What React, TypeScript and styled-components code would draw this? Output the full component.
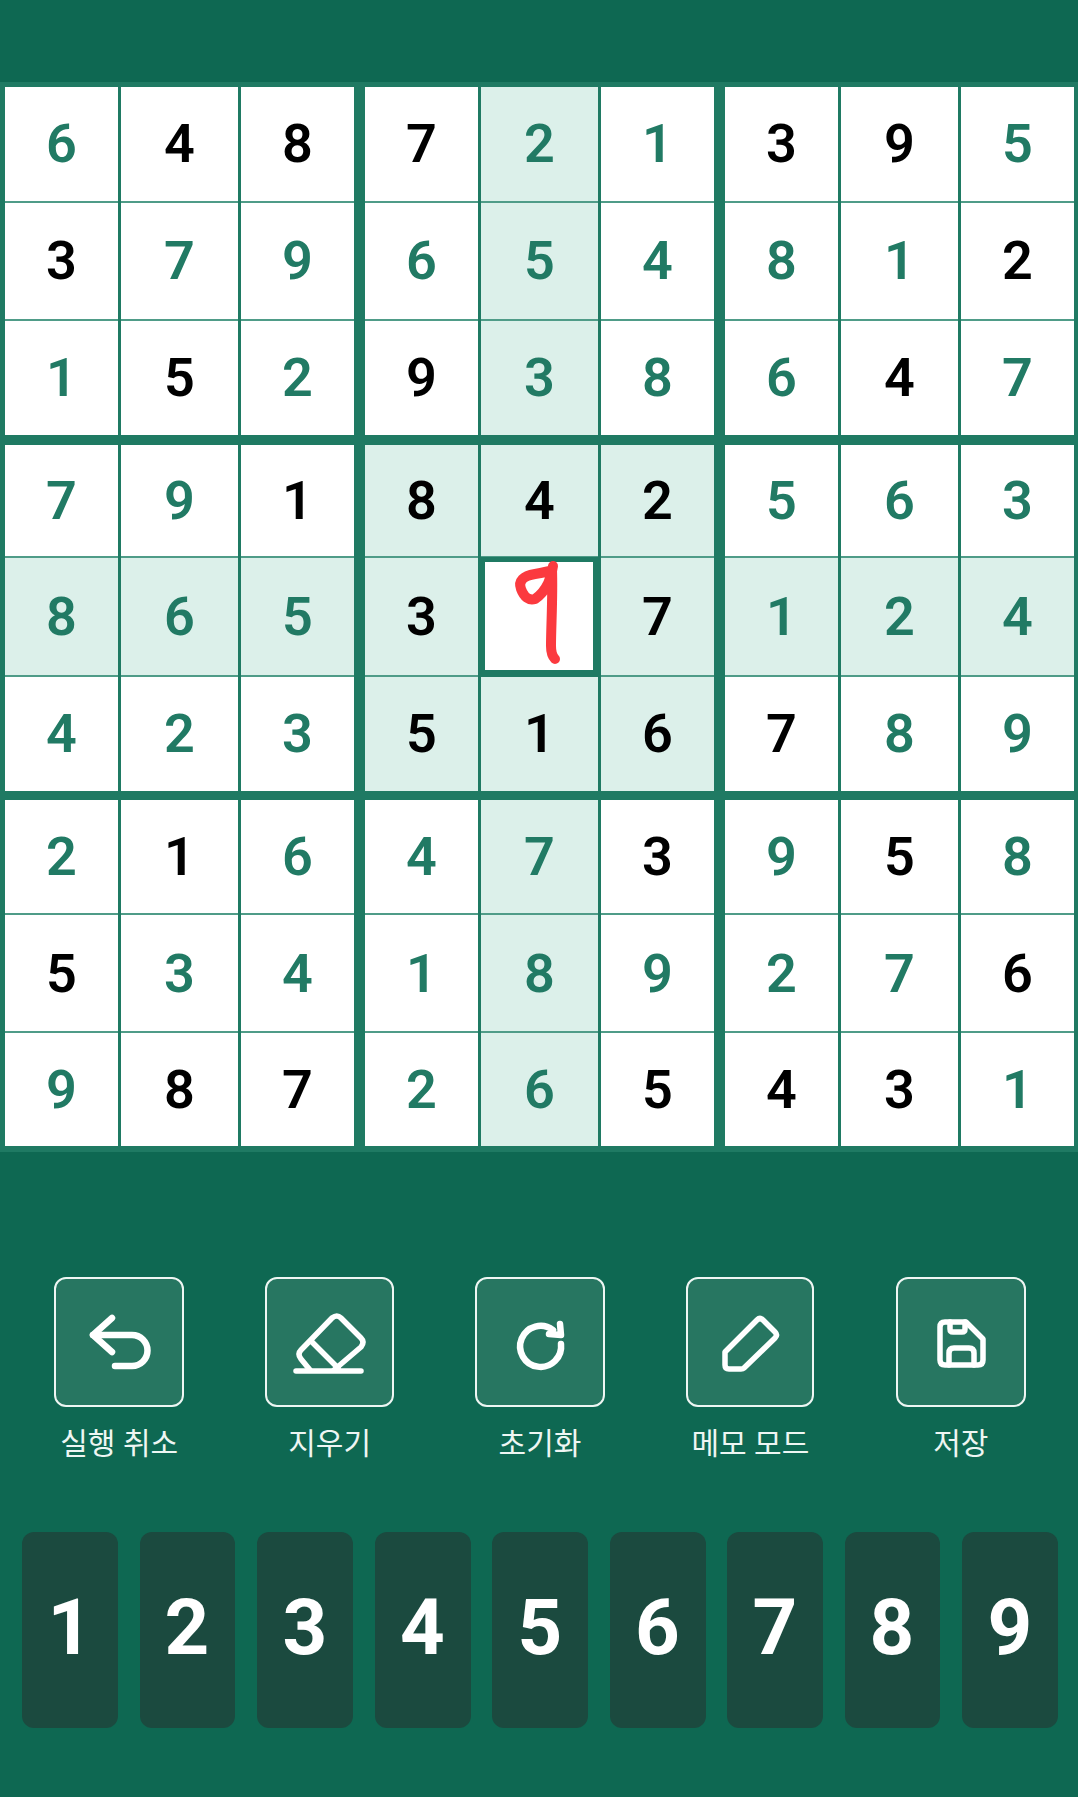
import styled, { createGlobalStyle } from 'styled-components';

const GlobalStyle = createGlobalStyle`
  html, body {
    margin: 0;
    padding: 0;
    background: #0e6852;
  }

  * {
    box-sizing: border-box;
  }
`;

const Page = styled.div`
  width: 1078px;
  height: 1797px;
  padding-top: 82px;
  background: #0e6852;
  font-family: Roboto, 'Noto Sans CJK KR', sans-serif;
`;

const Board = styled.div`
  display: grid;
  grid-template-columns: repeat(3, 349px);
  grid-template-rows: 348px 346px 346px;
  column-gap: 11px;
  row-gap: 9.5px;
  height: 1070px;
  padding: 5px 4px 6px 5px;
  background: #1f7a63;
`;

const Box = styled.div<{ $rows: string }>`
  display: grid;
  grid-template-columns: 113px 117px 113px;
  grid-template-rows: ${props => props.$rows};
  column-gap: 3px;
`;

const Cell = styled.div<{ $given: boolean; $tint: boolean; $lined: boolean }>`
  position: relative;
  display: flex;
  align-items: center;
  justify-content: center;
  font-size: 54px;
  font-weight: 600;
  color: ${props => (props.$given ? '#000000' : '#217a64')};
  background: ${props => (props.$tint ? '#dcf0ea' : '#ffffff')};
  border-bottom: ${props => (props.$lined ? '2px solid #4f9c88' : 'none')};
`;

const SelectedCell = styled.div`
  position: relative;
  margin: -1px 0 0 -1px;
  background: #ffffff;
  border: 5px solid #1f7a63;
  border-bottom-width: 7px;
`;

const Scribble = styled.svg`
  position: absolute;
  top: -6px;
  left: 0;
  overflow: visible;
`;

const Actions = styled.div`
  display: grid;
  grid-template-columns: repeat(5, 1fr);
  margin-top: 125px;
  padding: 0 12px 0 14px;
`;

const Action = styled.div`
  display: flex;
  flex-direction: column;
  align-items: center;
`;

const ActionButton = styled.button<{ $width: number }>`
  display: flex;
  align-items: center;
  justify-content: center;
  width: ${props => props.$width}px;
  height: 130px;
  padding: 0;
  background: #277661;
  border: 2.5px solid #eef6f3;
  border-radius: 12px;

  svg {
    flex: none;
    width: 125px;
    height: 125px;
    fill: none;
    stroke: #ffffff;
    stroke-width: 5.5;
    stroke-linecap: round;
    stroke-linejoin: round;
  }
`;

const ActionLabel = styled.span`
  margin-top: 17px;
  font-size: 30px;
  line-height: 40px;
  color: #eef6f3;
`;

const NumberPad = styled.div`
  display: grid;
  grid-template-columns: repeat(9, 96px);
  column-gap: 21.5px;
  margin-top: 68px;
  padding-left: 22px;
`;

const NumberKey = styled.button<{ $narrow: boolean }>`
  width: ${props => (props.$narrow ? '95px' : '96px')};
  height: 196px;
  padding: 0 0 5px;
  font-family: Roboto, sans-serif;
  font-size: 78px;
  font-weight: 700;
  color: #ffffff;
  background: #1b4a3f;
  border: none;
  border-radius: 12px;
`;

const values = [
  '648721395',
  '379654812',
  '152938647',
  '791842563',
  '865307124',
  '423516789',
  '216473958',
  '534189276',
  '987265431',
];

// 1 = black digit, 0 = green digit
const given = [
  '011100110',
  '100000001',
  '010100010',
  '001111000',
  '000111000',
  '000111100',
  '010001010',
  '100000001',
  '011001110',
];

// the rows of the board are not quite even
const boxRows = ['115.5px 118px 1fr', '113px 119.5px 1fr', '115px 118px 1fr'];

const UndoIcon = () => (
  <svg viewBox="0 0 125 125">
    <path strokeWidth="6.5" d="M55 38 36 55l19 17" />
    <path strokeWidth="6.5" d="M36 55h39a15.5 15.5 0 0 1 0 31H58" />
  </svg>
);

const EraserIcon = () => (
  <svg viewBox="0 0 125 125">
    <path d="M43 90 34 79q-4-5 0-9L65 38q5-4 9 0L94 58q4 4 0 9L67 90" />
    <path d="M44 61 71 88" />
    <path d="M29 91h65" />
  </svg>
);

const ResetIcon = () => (
  <svg viewBox="0 0 125 125">
    <path strokeWidth="6.5" d="M84 64A20.5 20.5 0 1 1 76 50" />
    <path strokeWidth="6.5" d="M83 44 84 55 72 54" />
  </svg>
);

const PencilIcon = () => (
  <svg viewBox="0 0 125 125">
    <path d="M37 72 69 40q3-3 6 0L87 52q3 3 0 6L56 88q-1 1-3 1H41q-4 0-4-4Z" />
  </svg>
);

const SaveIcon = () => (
  <svg viewBox="0 0 125 125">
    <path d="M47 42H68L85 59V80q0 5-5 5H47q-5 0-5-5V47q0-5 5-5Z" />
    <path d="M52 42v7q0 3 3 3h9q3 0 3-3v-7" />
    <path d="M51 85V73q0-5 5-5H71q5 0 5 5V85" />
  </svg>
);

const actions = [
  { label: '실행 취소', width: 130, icon: <UndoIcon /> },
  { label: '지우기', width: 129, icon: <EraserIcon /> },
  { label: '초기화', width: 130, icon: <ResetIcon /> },
  { label: '메모 모드', width: 128, icon: <PencilIcon /> },
  { label: '저장', width: 130, icon: <SaveIcon /> },
];

const boxes = [0, 1, 2, 3, 4, 5, 6, 7, 8];
const cells = [0, 1, 2, 3, 4, 5, 6, 7, 8];

const App = () => {
  return (
    <Page>
      <GlobalStyle />
      <Board>
        {boxes.map(box => (
          <Box key={box} $rows={boxRows[Math.floor(box / 3)]}>
            {cells.map(cell => {
              const row = Math.floor(box / 3) * 3 + Math.floor(cell / 3);
              const col = (box % 3) * 3 + (cell % 3);

              if (row === 4 && col === 4) {
                return (
                  <SelectedCell key={cell}>
                    <Scribble width="114" height="120" viewBox="0 0 114 120" fill="none">
                      <path
                        d="M68 10C67 20 62 35 50 43C44 45 39 41 36 33C33 25 38 20 50 18C56 17 62 16 67 14C68 40 66 70 66 90C66 96 67 100 70 103"
                        stroke="#fb3a3f"
                        strokeWidth="10"
                        strokeLinecap="round"
                        strokeLinejoin="round"
                      />
                    </Scribble>
                  </SelectedCell>
                );
              }

              return (
                <Cell
                  key={cell}
                  $given={given[row][col] === '1'}
                  $tint={row === 4 || col === 4 || box === 4}
                  $lined={cell < 6}
                >
                  {values[row][col]}
                </Cell>
              );
            })}
          </Box>
        ))}
      </Board>
      <Actions>
        {actions.map(action => (
          <Action key={action.label}>
            <ActionButton $width={action.width}>{action.icon}</ActionButton>
            <ActionLabel>{action.label}</ActionLabel>
          </Action>
        ))}
      </Actions>
      <NumberPad>
        {cells.map(n => (
          <NumberKey key={n} $narrow={n === 1 || n === 7}>
            {n + 1}
          </NumberKey>
        ))}
      </NumberPad>
    </Page>
  );
};

export default App;
